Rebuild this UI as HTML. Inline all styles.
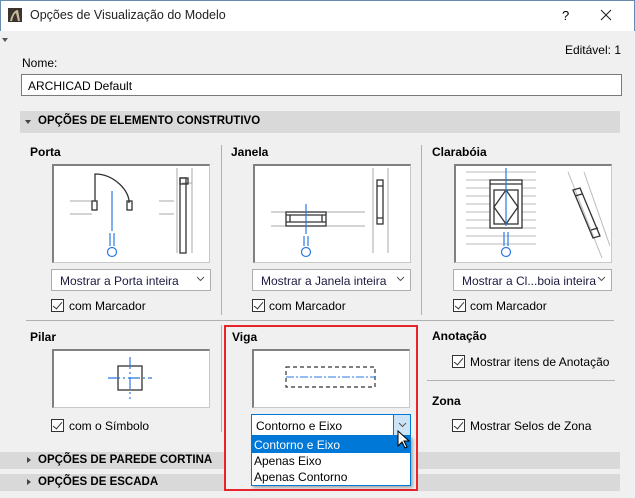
<!DOCTYPE html>
<html><head><meta charset="utf-8"><style>
*{margin:0;padding:0;box-sizing:border-box}
body{width:635px;height:498px;overflow:hidden;background:#f0f0f0;font-family:"Liberation Sans",sans-serif;font-size:12px;color:#000;position:relative}
.a{position:absolute;white-space:nowrap}
.b{font-weight:bold}
.box{position:absolute;background:#fff;border:1px solid #c8c8c8;border-top:2px solid #808080;border-left:2px solid #808080}
.sel{position:absolute;background:#fff;border:1px solid #adadad;height:22px;padding:4px 0 0 8px;color:#1a1a40}
.sel .ar{position:absolute;right:5px;top:6px}
.cb{position:absolute;width:13px;height:13px;border:1px solid #333;background:#fff}
.cb:after{content:"";position:absolute;left:3px;top:0px;width:4px;height:8px;border:solid #333;border-width:0 1.5px 1.5px 0;transform:rotate(40deg)}
.hdr{position:absolute;background:#d9d9d9;height:17px}
.tri{position:absolute;width:0;height:0}
</style></head><body>
<div class="a" style="left:0;top:0;width:635px;height:31px;background:#fff;border:1px solid #6a8bb0;border-bottom:none"></div>
<svg class="a" style="left:8px;top:8px" width="14" height="14"><rect width="14" height="14" fill="#3a342c"/><path d="M2 13 C4 5 7 2 10 2 L12 13 L10 13 L8 5 C6 6 5 9 4 13Z" fill="#c9b89a"/></svg>
<div class="a" style="left:30px;top:8px;font-size:12.5px;color:#222">Opções de Visualização do Modelo</div>
<div class="a" style="left:562px;top:8px;font-size:13px">?</div>
<svg class="a" style="left:600px;top:9px" width="12" height="12"><path d="M1 1L11 11M11 1L1 11" stroke="#222" stroke-width="1.1"/></svg>
<div class="tri" style="left:2px;top:38px;border-left:3px solid transparent;border-right:3px solid transparent;border-top:4px solid #555"></div>
<div class="a" style="right:14px;top:43px">Editável: 1</div>
<div class="a" style="left:22px;top:56px">Nome:</div>
<div class="a" style="left:21px;top:74px;width:601px;height:22px;background:#fff;border:1px solid #7a7a7a;padding:4px 0 0 6px">ARCHICAD Default</div>
<div class="hdr" style="left:20px;top:111px;width:600px;height:22px"></div>
<div class="a b" style="left:38px;top:115px;font-size:11.5px">OPÇÕES DE ELEMENTO CONSTRUTIVO</div>
<div class="tri" style="left:25px;top:120px;border-left:3px solid transparent;border-right:3px solid transparent;border-top:4px solid #444"></div>

<div class="a" style="left:221px;top:145px;width:1px;height:170px;background:#b0b0b0"></div>
<div class="a" style="left:421px;top:145px;width:1px;height:170px;background:#b0b0b0"></div>
<div class="a" style="left:26px;top:320px;width:588px;height:1px;background:#b0b0b0"></div>

<div class="a b" style="left:30px;top:145px">Porta</div>
<div class="a b" style="left:231px;top:145px">Janela</div>
<div class="a b" style="left:432px;top:145px">Clarabóia</div>

<div class="box" style="left:52px;top:164px;width:158px;height:99px"></div>
<svg class="a" style="left:54px;top:166px" width="154" height="96">
<g fill="none" stroke="#aaa"><path d="M16 35H38M16 48H38M105 35H120M105 48H120"/><path d="M123 2V87M138 2V87M128 17H138"/></g>
<g fill="none" stroke="#333" stroke-width="1.3"><path d="M41 35V8C60 8 76 25 75 37"/><rect x="38" y="35" width="5" height="9"/><rect x="73" y="35" width="5" height="9"/><rect x="126" y="12" width="6" height="75"/><rect x="126" y="12" width="8" height="6"/></g>
<g fill="none" stroke="#2a7ae2" stroke-width="1.2"><path d="M58 25V65M56 67V80M60 67V80"/><circle cx="58" cy="86" r="4.5"/></g>
</svg>
<div class="sel" style="left:51px;top:269px;width:160px">Mostrar a Porta inteira<svg class="ar" width="9" height="6"><path d="M1 1L4.5 4.5L8 1" fill="none" stroke="#555"/></svg></div>
<div class="cb" style="left:51px;top:299px"></div><div class="a" style="left:69px;top:299px">com Marcador</div>

<div class="box" style="left:253px;top:164px;width:158px;height:99px"></div>
<svg class="a" style="left:255px;top:166px" width="154" height="96">
<g fill="none" stroke="#aaa"><path d="M16 46H110M16 60H110M118 2V87M133 2V87"/></g>
<g fill="none" stroke="#333" stroke-width="1.3"><rect x="31" y="46" width="40" height="14"/><path d="M31 49H71M31 56H71M35 49V56M67 49V56"/><rect x="122" y="14" width="6" height="44"/><path d="M122 20H128M122 52H128"/></g>
<g fill="none" stroke="#2a7ae2" stroke-width="1.2"><path d="M51 38V68M49 70V80M53 70V80"/><circle cx="51" cy="86" r="4.5"/></g>
</svg>
<div class="sel" style="left:252px;top:269px;width:159px">Mostrar a Janela inteira<svg class="ar" width="9" height="6"><path d="M1 1L4.5 4.5L8 1" fill="none" stroke="#555"/></svg></div>
<div class="cb" style="left:252px;top:299px"></div><div class="a" style="left:269px;top:299px">com Marcador</div>

<div class="box" style="left:454px;top:164px;width:158px;height:99px"></div>
<svg class="a" style="left:456px;top:166px" width="154" height="96">
<g stroke="#bbb"><path d="M10 6H80M10 14H80M10 22H80M10 30H80M10 38H80M10 46H80M10 54H80M10 62H80M10 70H80M10 78H80"/><path d="M112 6L146 92M128 6L154 80" fill="none"/></g>
<g fill="none" stroke="#333" stroke-width="1.3"><rect x="34" y="14" width="32" height="48" fill="#fff"/><path d="M34 18H66"/><rect x="38" y="24" width="24" height="34"/><path d="M50 24L62 41L50 58L38 41Z"/><path d="M117 24L124 22L144 70L137 72Z"/><path d="M119 30L126 28M135 64L142 62"/></g>
<g fill="none" stroke="#2a7ae2" stroke-width="1.2"><path d="M50 2V60M48 66V80M52 66V80"/><circle cx="50" cy="86" r="4.5"/></g>
</svg>
<div class="sel" style="left:453px;top:269px;width:159px">Mostrar a Cl...boia inteira<svg class="ar" width="9" height="6"><path d="M1 1L4.5 4.5L8 1" fill="none" stroke="#555"/></svg></div>
<div class="cb" style="left:453px;top:299px"></div><div class="a" style="left:470px;top:299px">com Marcador</div>

<div class="a" style="left:221px;top:325px;width:1px;height:107px;background:#b0b0b0"></div>
<div class="a b" style="left:30px;top:330px">Pilar</div>
<div class="box" style="left:52px;top:349px;width:158px;height:59px"></div>
<svg class="a" style="left:54px;top:351px" width="154" height="56">
<rect x="64" y="15" width="24" height="24" fill="none" stroke="#333" stroke-width="1.3"/>
<path d="M76 6V48M54 27H98" stroke="#2a7ae2" stroke-dasharray="12 3 2 3" stroke-width="1.2"/>
</svg>
<div class="cb" style="left:51px;top:419px"></div><div class="a" style="left:69px;top:419px">com o Símbolo</div>

<div class="a" style="left:224px;top:325px;width:194px;height:166px;border:2px solid #e8242b"></div>
<div class="a b" style="left:232px;top:330px">Viga</div>
<div class="box" style="left:252px;top:349px;width:158px;height:59px"></div>
<svg class="a" style="left:254px;top:351px" width="154" height="56">
<rect x="32" y="16" width="89" height="20" fill="none" stroke="#333" stroke-dasharray="4 3" stroke-width="1.2"/>
<path d="M32 26H121" stroke="#2a7ae2" stroke-dasharray="8 2 2 2"/>
</svg>
<div class="a" style="left:251px;top:414px;width:160px;height:22px;background:#fff;border:1px solid #0078d7;padding:4px 0 0 4px">Contorno e Eixo</div>
<div class="a" style="left:393px;top:415px;width:17px;height:20px;background:#cce4f7;border-left:1px solid #0078d7"><svg style="position:absolute;left:4px;top:7px" width="9" height="6"><path d="M1 1L4.5 4.5L8 1" fill="none" stroke="#555"/></svg></div>
<div class="a" style="left:251px;top:436px;width:160px;height:50px;background:#fff;border:1px solid #0078d7;box-shadow:2px 2px 3px rgba(0,0,0,.3)"></div>
<div class="a" style="left:252px;top:437px;width:158px;height:16px;background:#0078d7;color:#fff;padding:1px 0 0 2px">Contorno e Eixo</div>
<div class="a" style="left:254px;top:454px">Apenas Eixo</div>
<div class="a" style="left:254px;top:470px">Apenas Contorno</div>
<svg class="a" style="left:397px;top:430px" width="14" height="20"><path d="M1 1V16L5 12L8 18L10 17L7 11H12Z" fill="#fff" stroke="#000"/></svg>

<div class="a b" style="left:432px;top:329px">Anotação</div>
<div class="cb" style="left:452px;top:355px"></div><div class="a" style="left:470px;top:355px">Mostrar itens de Anotação</div>
<div class="a" style="left:427px;top:380px;width:188px;height:1px;background:#b0b0b0"></div>
<div class="a b" style="left:432px;top:394px">Zona</div>
<div class="cb" style="left:452px;top:419px"></div><div class="a" style="left:470px;top:419px">Mostrar Selos de Zona</div>

<div class="hdr" style="left:0;top:452px;width:224px"></div>
<div class="hdr" style="left:418px;top:452px;width:202px"></div>
<div class="tri" style="left:27px;top:457px;border-top:3px solid transparent;border-bottom:3px solid transparent;border-left:4px solid #444"></div>
<div class="a b" style="left:38px;top:454px;font-size:11.5px">OPÇÕES DE PAREDE CORTINA</div>
<div class="hdr" style="left:0;top:474px;width:224px"></div>
<div class="hdr" style="left:418px;top:474px;width:202px"></div>
<div class="tri" style="left:27px;top:479px;border-top:3px solid transparent;border-bottom:3px solid transparent;border-left:4px solid #444"></div>
<div class="a b" style="left:38px;top:476px;font-size:11.5px">OPÇÕES DE ESCADA</div>
</body></html>
